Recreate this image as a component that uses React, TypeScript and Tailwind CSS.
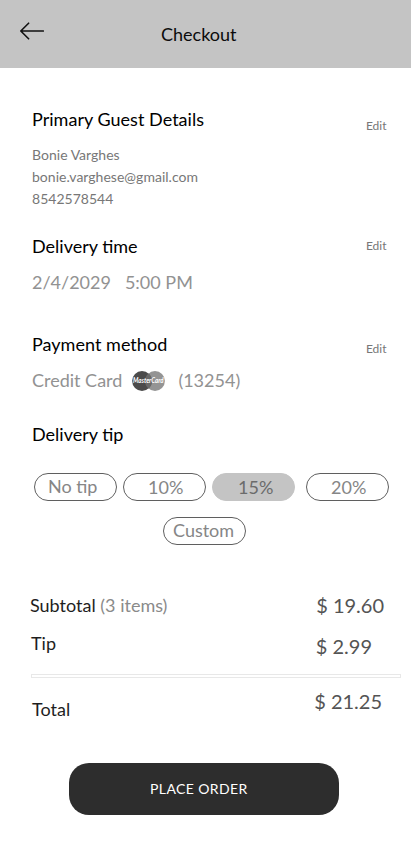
import type { ReactNode } from "react";

function Heading({ children, className = "" }: { children: ReactNode; className?: string }) {
  return <h2 className={`text-[18px] leading-[22px] text-black ${className}`}>{children}</h2>;
}

function Edit({ className }: { className: string }) {
  return (
    <button className={`block h-[14px] text-[12px] leading-[14px] text-[#777] ${className}`}>Edit</button>
  );
}

function MasterCard() {
  return (
    <svg className="ml-[10px] mt-[2px] h-5 w-[33px] shrink-0 overflow-visible" viewBox="0 0 33 20">
      <circle cx="23" cy="10" r="9.9" fill="#949494" />
      <circle cx="10" cy="10" r="9.9" fill="#4b4b4b" />
      <path d="M16.5 2.5a9.9 9.9 0 0 1 0 15a9.9 9.9 0 0 1 0-15Z" fill="#696969" />
      <text
        x="1"
        y="12.4"
        textLength="30.6"
        lengthAdjust="spacingAndGlyphs"
        fill="#fff"
        fontSize="6.8"
        fontWeight="700"
        fontStyle="italic"
        fontFamily="Lato, sans-serif"
      >
        MasterCard
      </text>
    </svg>
  );
}

function Pill({ label, className, selected }: { label: string; className: string; selected?: boolean }) {
  return (
    <button
      className={`block h-7 w-[83px] shrink-0 rounded-full border text-left text-[18px] leading-[22px] ${
        selected ? "border-[#c4c4c4] bg-[#c4c4c4] text-[#6b6b6b]" : "border-[#5f5f5f] text-[#868686]"
      } ${className}`}
    >
      {label}
    </button>
  );
}

export default function App() {
  return (
    <div className="h-[856px] w-[411px] overflow-hidden bg-white font-['Lato',sans-serif]">
      <header className="flex h-[68px] bg-[#c4c4c4]">
        <svg
          className="ml-5 mt-[22px] h-[18px] w-6"
          viewBox="0 0 24 18"
          fill="none"
          stroke="#111"
          strokeWidth="1.6"
          strokeLinecap="round"
          strokeLinejoin="round"
        >
          <path d="M23.4 9H.8M8.6 1.2.8 9l7.8 7.8" />
        </svg>
        <h1 className="ml-[117px] mt-[23px] text-[18px] leading-[22px] text-[#0c0c0c]">Checkout</h1>
      </header>

      <main>
        <section className="flex h-[167px] justify-between pl-8 pr-[24.5px] pt-10">
          <div>
            <Heading className="tracking-[0.03px]">Primary Guest Details</Heading>
            <div className="mt-[14px] text-[14px] leading-[22px] tracking-[0.02px] text-[#777]">
              <p>Bonie Varghes</p>
              <p>bonie.varghese@gmail.com</p>
              <p>8542578544</p>
            </div>
          </div>
          <Edit className="mt-[11px]" />
        </section>

        <section className="flex h-[98px] justify-between pl-8 pr-[24.5px]">
          <div>
            <Heading>Delivery time</Heading>
            <p className="mt-[14px] flex gap-[14px] text-[18px] leading-[22px] text-[#929292]">
              <span>2/4/2029</span>
              <span>5:00 PM</span>
            </p>
          </div>
          <Edit className="mt-[4px]" />
        </section>

        <section className="flex h-[90px] justify-between pl-8 pr-[24.5px]">
          <div>
            <Heading className="tracking-[0.03px]">Payment method</Heading>
            <div className="mt-[14px] flex text-[18px] leading-[22px] text-[#929292]">
              <span>Credit Card</span>
              <MasterCard />
              <span className="ml-[13px]">(13254)</span>
            </div>
          </div>
          <Edit className="mt-[9px]" />
        </section>

        <section className="h-[171px]">
          <div className="pl-8">
            <Heading>Delivery tip</Heading>
          </div>
          <div className="mt-7 flex pl-[34px]">
            <Pill label="No tip" className="pb-[3px] pl-[13px]" />
            <Pill label="10%" className="ml-1.5 pb-px pl-6 pt-px" />
            <Pill label="15%" className="ml-1.5 pb-px pl-[25px] pt-px" selected />
            <Pill label="20%" className="ml-[11px] pb-px pl-6 pt-px" />
          </div>
          <div className="mt-4 pl-[163px]">
            <Pill label="Custom" className="pb-[3px] pl-[9px]" />
          </div>
        </section>

        <section className="text-[18px] leading-[22px] text-[#1e1e1e]">
          <div className="flex h-[38px] justify-between pl-[30px] pr-[27px]">
            <p>
              Subtotal <span className="text-[#8a8a8a]">(3 items)</span>
            </p>
            <p className="-mt-px text-[20px] leading-[24px] text-[#545454]">$ 19.60</p>
          </div>
          <div className="flex h-[42px] justify-between pl-[31px] pr-[39px]">
            <p>Tip</p>
            <p className="mt-[2px] text-[20px] leading-[24px] text-[#545454]">$ 2.99</p>
          </div>
          <div className="ml-[31px] h-[4px] w-[370px] border border-[#e8e8e8]" />
          <div className="flex justify-between pl-8 pr-[29px] pt-[11px]">
            <p className="mt-[9px]">Total</p>
            <p className="text-[20px] leading-[24px] text-[#545454]">$ 21.25</p>
          </div>
        </section>

        <button className="ml-[69px] mt-[43px] block h-[52px] w-[270px] rounded-[20px] bg-[#2d2d2d] pb-[2px] pl-[81px] text-left text-[14px] leading-[17px] tracking-[0.4px] text-white">
          PLACE ORDER
        </button>
      </main>
    </div>
  );
}
